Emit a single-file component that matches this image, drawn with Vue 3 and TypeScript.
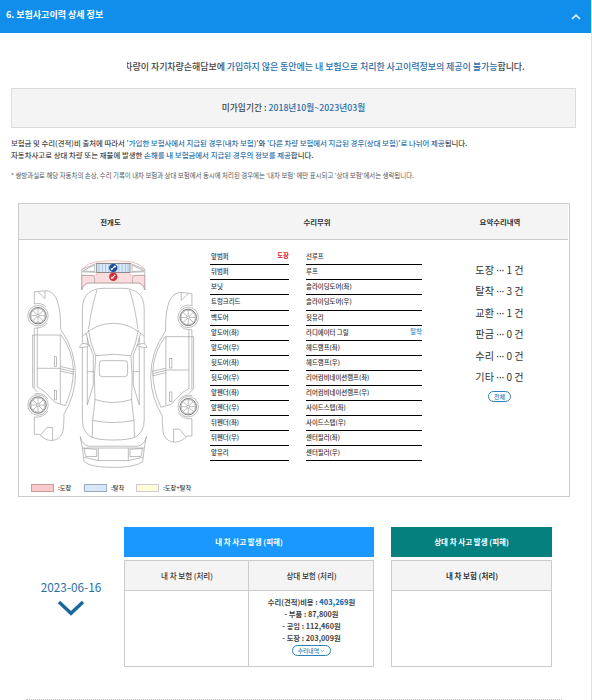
<script setup lang="ts">
interface Part {
  name: string
  tag?: string
  kind?: 'paint' | 'detach'
}
interface Count {
  label: string
  value: number
}

const leftParts: Part[] = [
  { name: '앞범퍼', tag: '도장', kind: 'paint' },
  { name: '뒤범퍼' },
  { name: '보닛' },
  { name: '트렁크리드' },
  { name: '백도어' },
  { name: '앞도어(좌)' },
  { name: '앞도어(우)' },
  { name: '뒷도어(좌)' },
  { name: '뒷도어(우)' },
  { name: '앞펜더(좌)' },
  { name: '앞펜더(우)' },
  { name: '뒤펜더(좌)' },
  { name: '뒤펜더(우)' },
  { name: '앞유리' },
]
const rightParts: Part[] = [
  { name: '선루프' },
  { name: '루프' },
  { name: '슬라이딩도어(좌)' },
  { name: '슬라이딩도어(우)' },
  { name: '뒷유리' },
  { name: '라디에이터 그릴', tag: '탈착', kind: 'detach' },
  { name: '헤드램프(좌)' },
  { name: '헤드램프(우)' },
  { name: '리어컴비네이션램프(좌)' },
  { name: '리어컴비네이션램프(우)' },
  { name: '사이드스텝(좌)' },
  { name: '사이드스텝(우)' },
  { name: '센터필러(좌)' },
  { name: '센터필러(우)' },
]
const columns: Part[][] = [leftParts, rightParts]
const counts: Count[] = [
  { label: '도장', value: 1 },
  { label: '탈착', value: 3 },
  { label: '교환', value: 1 },
  { label: '판금', value: 0 },
  { label: '수리', value: 0 },
  { label: '기타', value: 0 },
]
const costs = ['- 부품 : 87,800원', '- 공임 : 112,460원', '- 도장 : 203,009원']
const sides = ['', 'translate(226.2 1.7) scale(-1 1)']
const wheels = [315.7, 405]
const spokes = [0, 45, 90, 135]
const bars = [99, 102.3, 105.6, 108.9, 112.2, 115.5, 118.8, 122.1, 125.4, 128]
</script>

<template>
  <div class="page">
    <header class="bar">
      <h2>6. 보험사고이력 상세 정보</h2>
      <svg class="up" viewBox="0 0 10 6"><path d="M1 5 L5 1.2 L9 5" /></svg>
    </header>

    <p class="notice">
      <span class="cut">차</span>량이 자기차량손해담보에 <b>가입하지 않은 동안에는 내 보험으로 처리한 사고이력정보의 제공이 불가능</b>합니다.
    </p>

    <div class="period"><span>미가입기간 : <b>2018년10월~2023년03월</b></span></div>

    <p class="desc d1">보험금 및 수리(견적)비 출처에 따라서 <b>'가입한 보험사에서 지급된 경우(내차 보험)'</b>와 <b>'다른 차량 보험에서 지급된 경우(상대 보험)'로 나뉘어 제공</b>됩니다.</p>
    <p class="desc d2">자동차사고로 상대 차량 또는 재물에 발생한 <b>손해를 내 보험금에서 지급된 경우의 정보를 제공</b>합니다.</p>
    <p class="note">* 쌍방과실로 해당 자동차의 손상, 수리 기록이 내차 보험과 상대 보험에서 동시에 처리된 경우에는 '내차 보험' 에만 표시되고 '상대 보험'에서는 생략됩니다.</p>

    <section class="detail">
      <div class="thead">
        <span>전개도</span><span>수리부위</span><span>요약수리내역</span>
      </div>
      <div class="tbody">
        <div class="diagram">
          <svg class="car" viewBox="19 250 186 225">
            <g class="ln">
              <!-- front bumper, grille and head lamps -->
              <path class="pink" d="M81.7 290V275.2H96.5V272.5H130V275.2H144.8V290Q143.5 283 137 283H90Q83.5 283 81.7 290Z" />
              <path class="pinkln" d="M82 269Q88 263 96 261.8Q113.3 259.4 131 261.8Q140 264 144.6 269" />
              <path d="M81.7 290V269.5L96.5 263.4H130L144.8 269.5V290Q143.5 283 137 283H90Q83.5 283 81.7 290M82 271.8L96 272.3M144.6 271.8L130.5 272.3M82.8 270.8L94.7 265V271.7ZM143.8 270.8L132 265V271.7ZM82 275.5H92Q95.5 275.5 94.5 283M144.6 275.5H135Q131.5 275.5 132.5 283" />
              <rect class="grille" x="96.7" y="263.4" width="33.3" height="9" />
              <path v-for="x in bars" :key="x" class="slat" :d="`M${x} 264V272`" />
              <!-- body seen from above -->
              <path d="M82.4 340V309Q82.4 298 88.5 293Q94 288.5 103 288.3H123.6Q132.5 288.5 138 293Q144.2 298 144.2 309V420Q144.2 432 135.5 437Q129 440 113.3 440Q97.6 440 91 437Q82.4 432 82.4 420V340" />
              <path d="M97 290Q92 305 88.5 329M129.6 290Q134.6 305 138 329" />
              <path d="M82.7 336Q96 323.3 113.3 323.3Q130.5 323.3 143.9 336" />
              <path d="M88.3 330Q90 342 95.7 355.7Q113.3 352.8 130.9 355.7Q136.6 342 138.3 330M86 333Q88 344 93.3 355V385L87.3 405V338M140.6 333Q138.6 344 133.3 355V385L139.3 405V338" />
              <path d="M95.7 355.7Q93.4 377 95 400Q94 410 92.6 421L92.2 437M130.9 355.7Q133.2 377 131.6 400Q132.6 410 134 421L134.4 437" />
              <path d="M95 399.5Q113.3 405.5 131.6 399.5M92.7 420.5Q113.3 424.5 133.9 420.5M87.3 371.7H94M132.6 371.7H139.3" />
              <rect x="99.3" y="360.7" width="28.3" height="16" rx="3" />
              <path class="fill" d="M79.6 347.5Q80.5 343 85 343.5L89.6 345.3Q86 348 79.6 347.5ZM147 347.5Q146.1 343 141.6 343.5L137 345.3Q140.6 348 147 347.5Z" />
              <!-- rear bumper -->
              <path d="M80.2 436.5Q82 445 89 446.2H137.6Q144.6 445 146.4 436.5L144.3 448L142.7 461.5Q136 467.4 113.3 467.4Q90 467.4 84 461.5L82.4 448Z" />
              <path d="M82.4 448H144.3M84 457.3L98.3 460.6H128.3L142.7 457.3M98.3 448V460.6M128.3 448V460.6M84 448.5L96.7 449.3V456.5H85.6ZM142.6 448.5L129.9 449.3V456.5H141Z" />
              <!-- side profiles -->
              <g v-for="(t, i) in sides" :key="i" :transform="t">
                <path d="M34.3 304V291.8L46.7 290.7Q54 292 57 300Q60.7 309 60.7 329.5Q75.5 350 75.5 375Q75 396 64 414Q64 427 62.5 433Q59 440.5 51 440.5Q44 440 39.5 434.3H34.3V417" />
                <path d="M40.5 435L46.7 427.5H52.6V440.3M38 292L45 298.5V291M34.3 328V388M37.3 328V387L44 391L55 402.5L65.3 405.6Q73.4 388 73.4 370Q72.5 350 61 335H32.6V387L37.3 392" />
                <path d="M60.3 335V403.5M37.3 368.3H60.3M60.3 366.5L74.3 369.7M60.3 368.7L74 372M60.3 371L74 374.2" />
                <rect x="54.3" y="356.7" width="2.2" height="9.6" /><rect x="54.3" y="390.3" width="2.2" height="9.6" />
                <path d="M34.3 304Q41 302 46 307M34.3 328Q43 328.5 47 323M34.3 394Q42 391.5 48 399M34.3 417Q43 418 48 411" />
                <g v-for="y in wheels" :key="y" :transform="`translate(38 ${y})`">
                  <circle class="fill" r="10.2" /><circle class="tire" r="8.2" /><circle r="7.2" /><circle r="1.4" />
                  <path v-for="a in spokes" :key="a" d="M-7.2 0H-1.4M1.4 0H7.2" :transform="`rotate(${a})`" />
                </g>
              </g>
            </g>
            <g transform="translate(113.3 267.9)"><circle r="4.2" fill="#1d4c9c" /><path class="tool" d="M-1.5 1.3L1.4 -1.2" /><circle cx="1.6" cy="-1.3" r="1.1" fill="#fff" /><circle cx="-1.6" cy="1.3" r="1" fill="#fff" /></g>
            <g transform="translate(113.3 276.8)"><circle r="4.2" fill="#cf2f35" /><path class="tool" d="M-.8 .8L2 -2" /><path d="M-2.4 2.3L-1.8 -.3L.8 1.5Z" fill="#fff" /></g>
          </svg>
          <div class="legend">
            <i class="lg-p"></i><span>:도장</span><i class="lg-d"></i><span>:탈착</span><i class="lg-b"></i><span>:도장+탈착</span>
          </div>
        </div>
        <ul v-for="(col, c) in columns" :key="c" class="parts">
          <li v-for="p in col" :key="p.name">
            <span>{{ p.name }}</span><em v-if="p.tag" :class="p.kind">{{ p.tag }}</em>
          </li>
        </ul>
        <div class="summary">
          <p v-for="c in counts" :key="c.label">{{ c.label }} <span class="mid">···</span> {{ c.value }} 건</p>
          <button class="pill all">전체</button>
        </div>
      </div>
    </section>

    <section class="event">
      <div class="when">
        <span>2023-06-16</span>
        <svg viewBox="0 0 28 17"><path d="M2 2L14 13.3L26 2" /></svg>
      </div>
      <div class="mine">
        <h3>내 차 사고 발생 (피해)</h3>
        <div class="grid two">
          <div class="gh">내 차 보험 (처리)</div>
          <div class="gh">상대 보험 (처리)</div>
          <div class="gc"></div>
          <div class="gc">
            <p>수리(견적)비용 : <b>403,269</b>원</p>
            <p v-for="c in costs" :key="c">{{ c }}</p>
            <button class="pill more">수리내역 <svg viewBox="0 0 6 4"><path d="M1 1L3 2.6L5 1" /></svg></button>
          </div>
        </div>
      </div>
      <div class="other">
        <h3>상대 차 사고 발생 (피해)</h3>
        <div class="grid">
          <div class="gh dark">내 차 보험 (처리)</div>
          <div class="gc"></div>
        </div>
      </div>
    </section>
    <div class="dots"></div>
  </div>
</template>

<style>
body { background: #fff; overflow: hidden; }
</style>

<style scoped>
.page { box-sizing: border-box; width: 592px; height: 700px; border-right: 1px solid #e2e2e2; font-family: "Noto Sans CJK KR", "Noto Sans", sans-serif; color: #444; white-space: nowrap; overflow: hidden; }
p, h2, h3, ul { margin: 0; padding: 0; }
ul { list-style: none; }
.bar { height: 33px; background: #118eec; display: flex; align-items: center; justify-content: space-between; padding: 0 10px 3px 6px; box-sizing: border-box; }
h2 { font-size: 9px; line-height: 14px; color: #fff; font-weight: 700; }
.up { width: 10px; height: 6px; margin-top: 4px; }
.up path { fill: none; stroke: #e4f5ff; stroke-width: 1.7; }
.notice { display: flex; margin: 27px 0 0 127px; height: 14px; font-size: 9px; letter-spacing: -.06px; line-height: 14px; font-weight: 500; white-space: pre; }
.notice b, .period b, .desc b { color: #2b6ea8; font-weight: inherit; }
.cut { display: flex; justify-content: flex-end; width: 5.5px; height: 14px; overflow: hidden; }
.period { box-sizing: border-box; width: 565px; height: 40px; margin: 14px 0 0 11px; border: 1px solid #dcdcdc; background: #f4f4f4; font-size: 8.72px; font-weight: 500; line-height: 38px; text-align: center; }
.desc { margin-left: 11px; font-size: 7.4px; line-height: 12px; height: 12px; font-weight: 500; }
.d1 { margin-top: 9px; }
.d2 { letter-spacing: .03px; }
.note { margin: 9px 0 0 11px; height: 12px; font-size: 6.43px; line-height: 12px; color: #555; }
.detail { box-sizing: border-box; width: 552px; height: 294px; margin: 21px 0 0 18px; border: 1px solid #ccc; }
.thead { height: 35px; margin-right: 1px; display: grid; grid-template-columns: 183px 230px 136px; background: #f4f4f4; border-bottom: 1px solid #ccc; font-size: 7.4px; font-weight: 700; line-height: 36px; text-align: center; color: #333; }
.tbody { display: flex; height: 256px; }
.tbody > * { flex-shrink: 0; }
.diagram { width: 191px; }
.car { display: block; width: 186px; height: 225px; margin-top: 10px; }
.ln { fill: none; stroke: #9b9b9b; stroke-width: .65; }
.ln .fill { fill: #fff; }
.ln .tire { stroke: #777; stroke-width: 1; }
.ln .pink { fill: #fbdcdc; stroke: #ecb3b3; }
.ln .pinkln { stroke: #e99; }
.ln .grille { fill: #dcebfb; stroke: #777; stroke-width: .8; }
.ln .slat { stroke: #8aa9cf; }
.tool { stroke: #fff; stroke-width: 1.1; fill: none; }
.legend { display: flex; align-items: center; height: 10px; margin: 8px 0 0 12px; font-size: 6.2px; line-height: 10px; font-weight: 500; color: #333; }
.legend i { box-sizing: border-box; width: 23px; height: 8px; border: 1px solid #bbb; }
.legend span { margin-left: 4px; width: 26px; }
.legend .lg-p { background: #f9caca; border-color: #c99; }
.legend .lg-d { background: #d9e7fa; border-color: #9ab; }
.legend .lg-b { background: #fdfbd9; border-color: #ccc; margin-left: -1px; }
.parts { width: 79px; padding-top: 10px; }
.parts + .parts { width: 116px; margin-left: 17px; }
.parts li { box-sizing: border-box; height: 15px; border-bottom: 1px solid #000; display: flex; justify-content: space-between; font-size: 6.4px; line-height: 13px; font-weight: 500; color: #333; padding-left: 1px; }
.parts + .parts li { padding-left: 0; }
.parts li:nth-child(4) { height: 16px; }
.parts em { font-style: normal; font-weight: 700; line-height: 11px; }
.paint { color: #d8282c; }
.detach { color: #5aa6d6; }
.summary { width: 155px; padding-top: 19px; text-align: center; }
.summary p { font-size: 10.1px; line-height: 21.4px; height: 21.4px; color: #333; }
.mid { display: inline-block; width: 8px; font-family: "Noto Sans", sans-serif; }
.pill { box-sizing: border-box; display: block; margin: 0 auto; padding: 0; border: 1px solid #2c7fb8; border-radius: 6px; background: #fff; color: #2c7fb8; font: 500 6px/9px "Noto Sans CJK KR", sans-serif; height: 11px; }
.all { width: 23px; margin-top: 4px; }
.event { display: flex; margin-top: 30px; height: 140px; }
.when { width: 106px; margin-left: 18px; padding-top: 51px; text-align: center; font-size: 11.8px; line-height: 18px; color: #2b6ea8; }
.when span { display: block; }
.when svg { display: block; width: 28px; height: 17px; margin: 4px auto 0; }
.when path { fill: none; stroke: #1b689f; stroke-width: 3.4; }
.mine { width: 250px; }
.other { width: 161px; margin-left: 17px; }
h3 { height: 30px; font-size: 7.5px; line-height: 30px; text-align: center; color: #fff; background: #1a98ff; font-weight: 700; }
.other h3 { background: #05807f; }
.grid { display: grid; grid-template-rows: 30px 76px; grid-template-columns: 1fr; margin-top: 3px; border: solid #ccc; border-width: 1px 0 0 1px; box-sizing: border-box; height: 107px; }
.two { grid-template-columns: 124px 125px; }
.gh, .gc { box-sizing: border-box; border: solid #ccc; border-width: 0 1px 1px 0; padding-left: 1px; text-align: center; }
.gh { background: #f4f4f4; font-size: 7.5px; line-height: 29px; font-weight: 500; color: #333; }
.dark { font-weight: 700; }
.gc { padding-top: 5px; font-size: 7.3px; line-height: 12px; font-weight: 700; color: #444; }
.gc b { color: #2070b4; }
.more { width: 39px; margin-top: 1px; font-size: 5.8px; }
.more svg { width: 5px; height: 4px; }
.more path { fill: none; stroke: #2c7fb8; stroke-width: .7; }
.dots { margin: 32px 0 0 26px; width: 536px; border-top: 1px dotted #bbb; }
</style>
